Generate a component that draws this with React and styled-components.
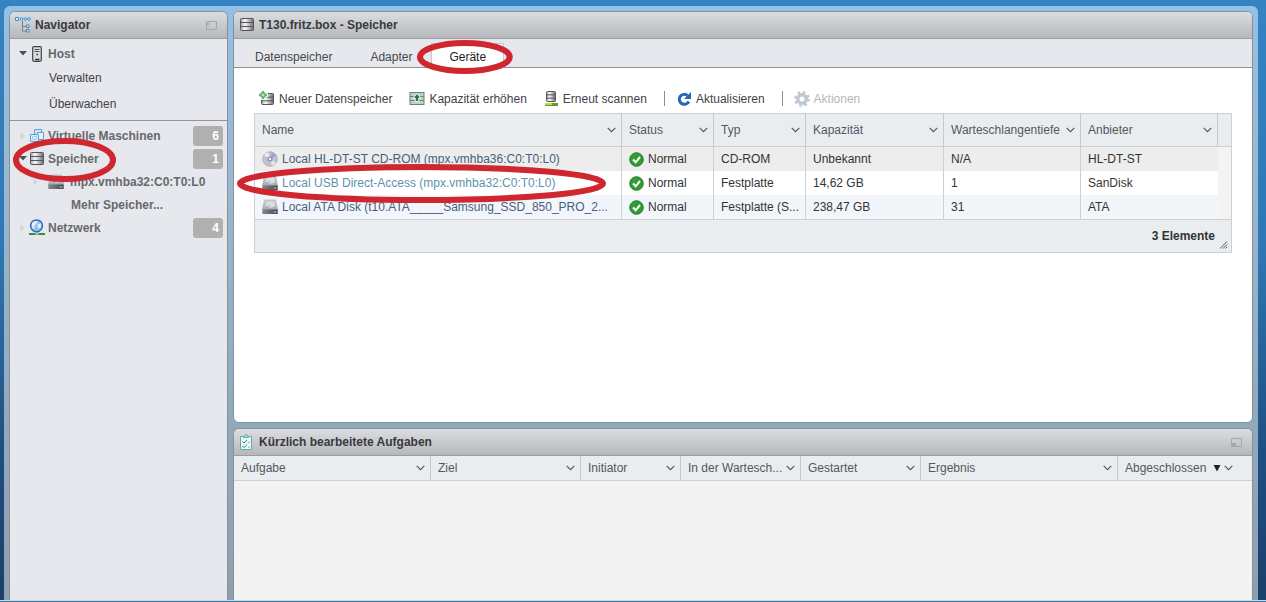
import React from "react";
import styled, { createGlobalStyle, css } from "styled-components";

const Global = createGlobalStyle`
  *, *::before, *::after { box-sizing: border-box; }
  body {
    margin: 0;
    font: 12px/16px "Liberation Sans", Arial, sans-serif;
    color: #333;
  }
  button {
    font: inherit;
    color: inherit;
    background: none;
    border: 0;
    padding: 0;
    margin: 0;
    text-align: left;
  }
  svg { display: block; flex: none; }
  table { border-collapse: separate; border-spacing: 0; table-layout: fixed; width: 100%; }
`;

const Desktop = styled.div`
  min-height: 100vh;
  display: flex;
  flex-direction: column;
  padding: 6px 8px 0 4px;
  background: linear-gradient(#3683c1, #2f78b5 40%, #1f4f82 75%, #1b3f6b);
`;

const Frame = styled.div`
  flex: 1;
  display: grid;
  grid-template-columns: 219px minmax(0, 1fr);
  gap: 5px;
  padding: 5px 5px 0;
  border-radius: 6px 6px 0 0;
  background: linear-gradient(#93c0e5, #9bb9d1 25%, #92a9bb 70%, #909fae);
`;

const Taskbar = styled.div`
  height: 2px;
  margin: 0 -8px 0 -4px;
  background: #456f92;
  border-top: 1px solid #b9e0f6;
`;

const Stack = styled.div`
  display: flex;
  flex-direction: column;
  gap: 5px;
`;

const Panel = styled.section`
  display: flex;
  flex-direction: column;
  border: 1px solid #85929d;
  border-bottom-width: ${(p) => (p.$docked ? "0" : "1px")};
  border-radius: ${(p) => (p.$docked ? "6px 6px 0 0" : "6px")};
  background: ${(p) => p.$bg};
  flex: ${(p) => (p.$grow ? "1" : "none")};
`;

const PanelHeader = styled.header`
  display: flex;
  align-items: center;
  gap: 4px;
  height: 27px;
  padding: 0 10px 0 5px;
  border-bottom: 1px solid #9b9da1;
  border-radius: 5px 5px 0 0;
  background: linear-gradient(#dcdde1, #b6b7bb);
`;

const Title = styled.h2`
  flex: 1;
  margin: 0;
  font-size: 12px;
  line-height: 16px;
  font-weight: bold;
  color: #363a3e;
`;

const RingBox = styled.span`
  position: absolute;
  z-index: 2;
  padding: 3px;
  pointer-events: none;
  ${(p) => p.$at}
  svg { width: 100%; height: 100%; overflow: visible; }
`;

const Ring = ({ at }) => (
  <RingBox $at={at}>
    <svg aria-hidden="true">
      <ellipse cx="50%" cy="50%" rx="50%" ry="50%" fill="none" stroke="#cf2630" strokeWidth="6" />
    </svg>
  </RingBox>
);

/* ---------- navigator ---------- */

const Group = styled.div`
  padding: 3px 4px 3px 5px;
  border-top: ${(p) => (p.$ruled ? "1px solid #92969b" : "0")};
`;

const NavRow = styled.div`
  position: relative;
  display: flex;
  align-items: center;
  height: 23px;
  padding-left: ${(p) => (p.$child ? "15px" : "2px")};
`;

const NavLink = styled.a`
  flex: 1;
  display: flex;
  align-items: center;
  color: #66696e;
  font-weight: bold;
  text-decoration: none;
  white-space: nowrap;
`;

const IconSlot = styled.span`
  width: ${(p) => (p.$wide ? "28px" : "19px")};
  display: flex;
  justify-content: ${(p) => (p.$wide ? "center" : "flex-start")};
`;

const SubLink = styled.a`
  display: flex;
  align-items: center;
  height: ${(p) => (p.$strong ? "23px" : "26px")};
  padding-left: ${(p) => (p.$strong ? "56px" : "34px")};
  color: ${(p) => (p.$strong ? "#66696e" : "#3f4246")};
  font-weight: ${(p) => (p.$strong ? "bold" : "normal")};
  text-decoration: none;
`;

const Toggle = styled.button`
  width: 11px;
  height: 16px;
  margin-right: 1px;
  display: flex;
  align-items: center;
  justify-content: center;
`;

const Badge = styled.span`
  width: 30px;
  height: 20px;
  padding-right: 4px;
  border-radius: 3px;
  background: #b0b0b1;
  color: #fff;
  font-weight: bold;
  line-height: 20px;
  text-align: right;
`;

/* ---------- content ---------- */

const TabBar = styled.div`
  display: flex;
  align-items: flex-end;
  height: 29px;
  padding-left: 2px;
  border-bottom: 1px solid #8f9397;
  background: #e7e8ed;
`;

const Tab = styled.button`
  position: relative;
  height: 24px;
  padding: 2px 18px 0;
  border: solid transparent;
  border-width: 1px 1px 0;
  color: #44484c;
  ${(p) =>
    p.$active &&
    css`
      margin-bottom: -1px;
      height: 25px;
      padding: 2px 17px 1px;
      border-color: #c3c5c9;
      background: #fff;
      color: #222;
    `}
`;

const Content = styled.div`
  padding: 16px 20px 169px;
`;

const Toolbar = styled.div`
  display: flex;
  align-items: center;
  height: 29px;
  padding-left: 5px;
`;

const Tool = styled.button`
  display: flex;
  align-items: center;
  gap: 4px;
  margin-right: 17px;
  color: ${(p) => (p.disabled ? "#b4b7ba" : "#3f4246")};
  white-space: nowrap;
`;

const Divider = styled.span`
  width: 1px;
  height: 15px;
  margin-right: 11px;
  background: #8b8f93;
`;

const GridBox = styled.div`
  border: 1px solid #cdd1d4;
  background: #eaedf0;
`;

const Th = styled.th`
  height: ${(p) => (p.$tall ? "33px" : "25px")};
  width: ${(p) => (p.$w ? p.$w + "px" : "auto")};
  padding: 0 5px 0 7px;
  border-right: ${(p) => (p.$last ? "0" : "1px solid #c5c9cc")};
  border-bottom: 1px solid #cdd1d4;
  background: #eaedf0;
  font-weight: normal;
  color: #54585d;
  text-align: left;
`;

const SortButton = styled.button`
  width: 100%;
  display: flex;
  align-items: center;
  gap: 2px;
`;

const SortLabel = styled.span`
  flex: 1;
  white-space: nowrap;
`;

const Tr = styled.tr`
  background: ${(p) => p.$bg};
`;

const Td = styled.td`
  position: relative;
  height: 24px;
  padding: 0 4px 0 7px;
  border-right: 1px solid #cdd1d4;
  white-space: nowrap;
  &:nth-last-child(2) { border-right-color: transparent; }
  &:last-child { border-right: 0; background: #f3f3f4; }
`;

const CellLine = styled.span`
  display: flex;
  align-items: center;
  gap: 4px;
`;

const DeviceLink = styled.a`
  text-decoration: none;
  color: ${(p) => (p.$hot ? "#5f92aa" : "#465f7c")};
`;

const GridFooter = styled.div`
  display: flex;
  align-items: center;
  justify-content: flex-end;
  gap: 4px;
  height: 33px;
  padding-right: 3px;
  border-top: 1px solid #cdd1d4;
  font-weight: bold;
  svg { align-self: flex-end; margin-bottom: 3px; }
`;

/* ---------- icons ---------- */

const Gradients = () => (
  <svg width="0" height="0" aria-hidden="true">
    <defs>
      <linearGradient id="steel">
        <stop offset="0" stopColor="#a3a5a7" />
        <stop offset=".35" stopColor="#fafafa" />
        <stop offset="1" stopColor="#6b6d70" />
      </linearGradient>
      <linearGradient id="lid" x2="0" y2="1">
        <stop offset="0" stopColor="#d3d5d8" />
        <stop offset="1" stopColor="#a4a9ae" />
      </linearGradient>
      <linearGradient id="bay">
        <stop offset="0" stopColor="#838a91" />
        <stop offset="1" stopColor="#41484f" />
      </linearGradient>
    </defs>
  </svg>
);

const Chevron = () => (
  <svg width="9" height="6" viewBox="0 0 9 6" fill="none" stroke="#54585d" strokeWidth="1.2">
    <path d="M.7 .8 4.5 4.6 8.3 .8" />
  </svg>
);

const Arrow = ({ open }) =>
  open ? (
    <svg width="8" height="5" viewBox="0 0 8 5"><path d="M0 0h8L4 4.6z" fill="#4d5155" /></svg>
  ) : (
    <svg width="5" height="8" viewBox="0 0 5 8"><path d="M.5.5v7L4.5 4z" fill="#cfd1d6" /></svg>
  );

const WindowIcon = ({ low }) => (
  <svg width="11" height="9" viewBox="0 0 11 9" fill="none" stroke="#a5a7aa">
    <path d="M.5 .5h10v8H.5z" />
    <path d={low ? "M1 5h4v3H1z" : "M1 2h2v2H1z"} fill="#a5a7aa" stroke="none" />
  </svg>
);

const TreeIcon = () => (
  <svg width="16" height="16" viewBox="0 0 16 16" fill="none">
    <path d="M7.5 4v10H11M7.5 9.500H11" stroke="#77838e" />
    <g stroke="#3a91cf" fill="#e3f1fb">
      <path d="M.5 .5h3v3h-3z" />
      <circle cx="6.500" cy="2" r="1.300" /><circle cx="10.300" cy="2" r="1.300" /><circle cx="14" cy="2" r="1.300" />
    </g>
    <g stroke="#4a83b5" fill="#e3f1fb">
      <path d="M11.500 8h2.500v2.500h-2.500zM11.500 12.500h2.500V15h-2.500z" />
    </g>
  </svg>
);

const HostIcon = () => (
  <svg width="16" height="16" viewBox="-3 0 16 16">
    <rect x=".7" y=".7" width="8.600" height="14.600" rx="1.200" fill="#dcdddd" stroke="#3f4245" strokeWidth="1.200" />
    <path d="M2.500 3.500h5M2.500 5.500h5" stroke="#4d5053" />
    <path d="M4.500 8.500h1.500M3 13.500h4.500" stroke="#333" strokeWidth="1.300" />
  </svg>
);

const Platters = ({ x, y, w, h }) => (
  <g fill="none" stroke="#54565a">
    <rect x={x} y={y} width={w} height={h} rx="1" fill="url(#steel)" />
    <path d={`M${x} ${y + h / 3}h${w}M${x} ${y + (2 * h) / 3}h${w}`} />
  </g>
);

const StorageIcon = () => (
  <svg width="16" height="16" viewBox="0 0 16 16"><Platters x={1.5} y={1.5} w={13} h={12} /></svg>
);

const VmIcon = () => (
  <svg width="16" height="16" viewBox="0 0 16 16" fill="#cfe6f7" stroke="#5aa0d3">
    <path d="M5.500 1.500h7v8h-7z" />
    <path d="M8.500 4.500h6v7h-6z" fill="#e6f3fc" />
    <path d="M1.500 6.500h8v7h-8z" fill="#d9edfa" />
    <path d="M3.500 8.500h4v3h-4z" fill="none" stroke="#a7cfec" />
  </svg>
);

const DiskIcon = () => (
  <svg width="16" height="16" viewBox="0 0 16 16">
    <path d="M2.500 1h11L15.700 11H.3z" fill="url(#lid)" stroke="#a7abaf" strokeWidth=".6" />
    <ellipse cx="8.500" cy="5.500" rx="4.500" ry="3" fill="#dcdfe1" />
    <path d="M5 8.500 8 6" stroke="#9aa0a6" />
    <path d="M.3 10.500h15.400V15H.3z" fill="url(#bay)" />
    <path d="M11.500 13h3" stroke="#9bd0d8" />
  </svg>
);

const DiscIcon = () => (
  <svg width="16" height="16" viewBox="0 0 16 16">
    <circle cx="8" cy="8" r="7.300" fill="#c3c2d4" stroke="#a9a8b9" strokeWidth=".8" />
    <path d="M8 8 2 4a7 7 0 0 1 4-2.800z" fill="#ecebf4" />
    <path d="M8 8l6 4a7 7 0 0 1-4 2.800z" fill="#e5e4ef" />
    <path d="M8 8 10 1.200A7 7 0 0 1 14.500 5z" fill="#a6a3c9" />
    <circle cx="8" cy="8" r="2.600" fill="#8e8bb6" />
    <circle cx="8" cy="8" r="1.200" fill="#fff" />
  </svg>
);

const NetworkIcon = () => (
  <svg width="17" height="17" viewBox="0 0 17 17">
    <path d="M0 15h16" stroke="#2f8f3a" strokeWidth="2" />
    <path d="M6 14h4" stroke="#9ed6a3" strokeWidth="3" />
    <circle cx="7.500" cy="6.800" r="6" fill="#8fc0f0" stroke="#2c62ad" strokeWidth="1.300" />
    <path d="M3 4.500C4.500 2 7 1.500 8.500 2.500L7 5.500 5 6.500 6 9 4.500 10C3 8.500 2.500 6.500 3 4.500zM9 5l3-.5v3L9.500 10 8.500 7z" fill="#e1effb" />
  </svg>
);

const AddStorageIcon = () => (
  <svg width="16" height="16" viewBox="0 0 16 16">
    <Platters x={2.5} y={2.5} w={12} h={11} />
    <path d="M3 .8h2V3h2.200v2H5v2.200H3V5H.8V3H3z" fill="#b6e3ae" stroke="#fff" strokeWidth="3" />
    <path d="M3 .8h2V3h2.200v2H5v2.200H3V5H.8V3H3z" fill="#b6e3ae" stroke="#3a9a3e" />
  </svg>
);

const GrowIcon = () => (
  <svg width="16" height="16" viewBox="0 0 16 16">
    <rect x="1" y="1.500" width="14" height="12" fill="#bfd2c9" stroke="#6f807a" />
    <path d="M1 5.500h14M1 9.500h14" stroke="#6f807a" />
    <path d="M8 2.500 12 7H9.800v3.500H6.200V7H4z" fill="#277a45" stroke="#f2faf5" />
  </svg>
);

const ScanIcon = () => (
  <svg width="15" height="15" viewBox="0 0 15 15">
    <Platters x={2.5} y={0.5} w={9} h={10} />
    <path d="M1 13.500h13" stroke="#5a9e22" strokeWidth="3" />
    <path d="M1 13h7" stroke="#b7dc42" strokeWidth="2" />
  </svg>
);

const RefreshIcon = () => (
  <svg width="16" height="16" viewBox="0 0 16 16" fill="none">
    <path d="M11.500 4.500A5 5 0 1 0 12.800 10.500" stroke="#2467b8" strokeWidth="3" />
    <path d="M15 1v7H8z" fill="#2467b8" />
  </svg>
);

const GearIcon = () => (
  <svg width="16" height="16" viewBox="0 0 16 16" fill="none">
    <circle cx="8" cy="8" r="6.500" stroke="#c2cbd5" strokeWidth="3" strokeDasharray="2.600 2.505" />
    <circle cx="8" cy="8" r="4.200" stroke="#bdc8d3" strokeWidth="3.400" />
  </svg>
);

const OkIcon = () => (
  <svg width="15" height="15" viewBox="0 0 15 15" fill="none">
    <circle cx="7.500" cy="7.500" r="6.800" fill="#319b38" stroke="#238029" />
    <path d="M4 7.500l2.700 2.800L11 5" stroke="#fff" strokeWidth="2" />
  </svg>
);

const TasksIcon = () => (
  <svg width="16" height="16" viewBox="0 0 16 16" fill="none">
    <path d="M1.500 2.500h11v13h-11z" fill="#e9f7f7" stroke="#5fa9b1" />
    <path d="M4.500 3.500 6 1h2l1.500 2.500z" fill="#cfe9eb" stroke="#5fa9b1" />
    <path d="M3.500 7.500 5 9l3-3M3.500 12 5 13.500l3-3" stroke="#2f9158" />
    <path d="M9 8.500h2M9 13h2" stroke="#8ab8bf" />
  </svg>
);

const SortedIcon = () => (
  <svg width="9" height="8" viewBox="0 0 9 8"><path d="M.5 1h7L4 7.500z" fill="#222" /></svg>
);

const GripIcon = () => (
  <svg width="9" height="8" viewBox="0 0 9 8" stroke="#555"><path d="M1 7.500l7-7M4 7.500l4-4M6.500 7.500l1.500-1.500" /></svg>
);

/* ---------- data ---------- */

const deviceColumns = [
  ["Name"],
  ["Status", 92],
  ["Typ", 92],
  ["Kapazität", 138],
  ["Warteschlangentiefe", 137],
  ["Anbieter", 137],
];

const devices = [
  { name: "Local HL-DT-ST CD-ROM (mpx.vmhba36:C0:T0:L0)", icon: <DiscIcon />, type: "CD-ROM", size: "Unbekannt", depth: "N/A", vendor: "HL-DT-ST", bg: "#ededed" },
  { name: "Local USB Direct-Access (mpx.vmhba32:C0:T0:L0)", icon: <DiskIcon />, type: "Festplatte", size: "14,62 GB", depth: "1", vendor: "SanDisk", bg: "#fff", hot: true },
  { name: "Local ATA Disk (t10.ATA_____Samsung_SSD_850_PRO_2...", icon: <DiskIcon />, type: "Festplatte (S...", size: "238,47 GB", depth: "31", vendor: "ATA", bg: "#f2f6fb" },
];

const taskColumns = [
  ["Aufgabe"],
  ["Ziel", 150],
  ["Initiator", 100],
  ["In der Wartesch...", 120],
  ["Gestartet", 120],
  ["Ergebnis"],
  ["Abgeschlossen", 120],
];

const HeaderCell = ({ label, width, tall, sorted, last }) => (
  <Th scope="col" $w={width} $tall={tall} $last={last}>
    <SortButton type="button">
      <SortLabel>{label}</SortLabel>
      {sorted && <SortedIcon />}
      <Chevron />
    </SortButton>
  </Th>
);

const NavItem = ({ icon, label, open, child, count, ring }) => (
  <NavRow $child={child}>
    <Toggle type="button" aria-label={label} aria-expanded={!!open}><Arrow open={open} /></Toggle>
    <NavLink href="#"><IconSlot $wide={child}>{icon}</IconSlot>{label}</NavLink>
    {count && <Badge>{count}</Badge>}
    {ring && <Ring at={{ left: "-2px", top: "-9px", width: "103px", height: "44px" }} />}
  </NavRow>
);

export default function App() {
  return (
    <Desktop>
      <Global />
      <Frame>
        <Panel as="nav" $docked $bg="#e7e8ed">
          <PanelHeader>
            <TreeIcon />
            <Title>Navigator</Title>
            <button type="button" aria-label="Navigator"><WindowIcon /></button>
          </PanelHeader>
          <Group>
            <NavItem icon={<HostIcon />} label="Host" open />
            <SubLink href="#">Verwalten</SubLink>
            <SubLink href="#">Überwachen</SubLink>
          </Group>
          <Group $ruled>
            <NavItem icon={<VmIcon />} label="Virtuelle Maschinen" count="6" />
            <NavItem icon={<StorageIcon />} label="Speicher" open count="1" ring />
            <NavItem icon={<DiskIcon />} label="mpx.vmhba32:C0:T0:L0" child />
            <SubLink href="#" $strong>Mehr Speicher...</SubLink>
            <NavItem icon={<NetworkIcon />} label="Netzwerk" count="4" />
          </Group>
          <Gradients />
        </Panel>

        <Stack>
          <Panel as="main" $bg="#fff">
            <PanelHeader>
              <StorageIcon />
              <Title>T130.fritz.box - Speicher</Title>
            </PanelHeader>
            <TabBar>
              <Tab type="button">Datenspeicher</Tab>
              <Tab type="button">Adapter</Tab>
              <Tab type="button" $active>
                Geräte
                <Ring at={{ left: "-15px", right: "-10px", top: "-4px", bottom: "-6px" }} />
              </Tab>
            </TabBar>
            <Content>
              <Toolbar>
                <Tool type="button"><AddStorageIcon />Neuer Datenspeicher</Tool>
                <Tool type="button"><GrowIcon />Kapazität erhöhen</Tool>
                <Tool type="button"><ScanIcon />Erneut scannen</Tool>
                <Divider />
                <Tool type="button"><RefreshIcon />Aktualisieren</Tool>
                <Divider />
                <Tool type="button" disabled><GearIcon />Aktionen</Tool>
              </Toolbar>
              <GridBox>
                <table>
                  <thead>
                    <tr>
                      {deviceColumns.map(([label, width]) => (
                        <HeaderCell key={label} label={label} width={width} tall />
                      ))}
                      <Th $w={13} $last $tall />
                    </tr>
                  </thead>
                  <tbody>
                    {devices.map((d) => (
                      <Tr key={d.name} $bg={d.bg}>
                        <Td>
                          <CellLine>{d.icon}<DeviceLink href="#" $hot={d.hot}>{d.name}</DeviceLink></CellLine>
                          {d.hot && <Ring at={{ left: "-18px", right: "15px", top: "-7px", bottom: "-8px" }} />}
                        </Td>
                        <Td><CellLine><OkIcon />Normal</CellLine></Td>
                        <Td>{d.type}</Td>
                        <Td>{d.size}</Td>
                        <Td>{d.depth}</Td>
                        <Td>{d.vendor}</Td>
                        <Td />
                      </Tr>
                    ))}
                  </tbody>
                </table>
                <GridFooter>3 Elemente<GripIcon /></GridFooter>
              </GridBox>
            </Content>
          </Panel>

          <Panel $docked $grow $bg="#f3f3f4">
            <PanelHeader>
              <TasksIcon />
              <Title>Kürzlich bearbeitete Aufgaben</Title>
              <button type="button" aria-label="Aufgaben"><WindowIcon low /></button>
            </PanelHeader>
            <table>
              <thead>
                <tr>
                  {taskColumns.map(([label, width]) => (
                    <HeaderCell key={label} label={label} width={width} sorted={label === "Abgeschlossen"} last={label === "Abgeschlossen"} />
                  ))}
                  <Th $w={14} $last />
                </tr>
              </thead>
            </table>
          </Panel>
        </Stack>
      </Frame>
      <Taskbar />
    </Desktop>
  );
}
